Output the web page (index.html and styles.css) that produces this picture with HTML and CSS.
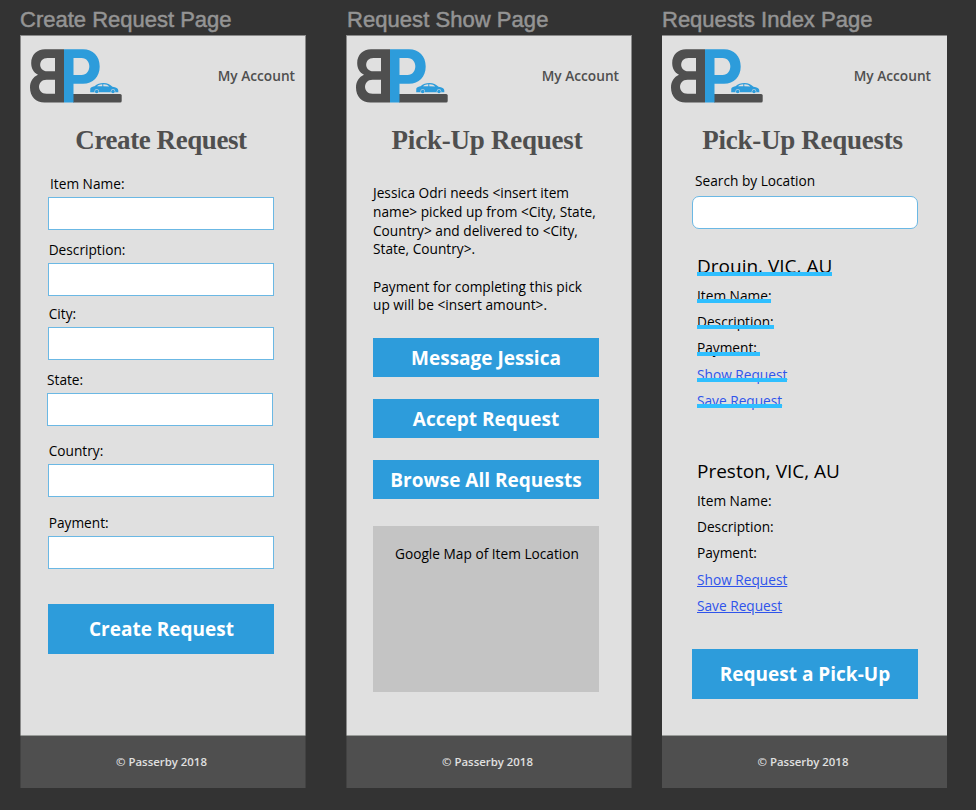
FILE: index.html
```html
<!DOCTYPE html>
<html lang="en">
<head>
<meta charset="utf-8">
<title>Passerby wireframes</title>
<link rel="stylesheet" href="styles.css">
</head>
<body>
<svg class="defs" width="0" height="0" aria-hidden="true">
  <symbol id="logo" viewBox="0 0 92 54">
    <path fill="#4f4f4f" fill-rule="evenodd" d="M34 0.300H15C7 0.300 1.200 6 1.200 14C1.200 19.500 3.500 23.500 8 25.800C3 28 0 32.500 0 38.500C0 47.500 6 53.600 14.500 53.600H34ZM25 9V22.300H17.500C7.800 22.300 7.800 9 17.500 9ZM25 30.700V44.700H16.500C6.600 44.700 6.600 30.700 16.500 30.700Z"/>
    <path fill="#4f4f4f" d="M43 45H90.200Q91.700 45 91.700 46.500V52.100Q91.700 53.600 90.200 53.600H43Z"/>
    <path fill="#2d9cdb" fill-rule="evenodd" d="M34 0.300H53C63 0.300 69.700 7 69.700 17.500C69.700 28 63 34.700 53 34.700H43.500V53.600H34ZM43.500 9V26H51.500C62 26 62 9 51.500 9Z"/>
    <path fill="#2d9cdb" d="M60.300 39.500C61 38 63 37.800 64.500 37.300C67 34.800 70 34 73.500 34C77.500 34 80 35.500 82.500 37.800C86 38.200 88.300 39.200 88.300 41.500V43.300H60.200Z"/>
    <path fill="#e0e0e0" d="M67 37.300C68.800 35.900 70.200 35.400 72.300 35.300V37.300ZM73.300 35.300C76 35.200 77.800 36.200 79.200 37.400L73.300 37.300Z"/>
    <circle cx="66.700" cy="42.500" r="2.300" fill="#e0e0e0"/><circle cx="83" cy="42.500" r="2.300" fill="#e0e0e0"/>
    <circle cx="66.700" cy="42.500" r="1.800" fill="#2d9cdb"/><circle cx="83" cy="42.500" r="1.800" fill="#2d9cdb"/>
  </symbol>
</svg>
<main class="board">
  <section class="artboard">
    <h2 class="artboard-name">Create Request Page</h2>
    <div class="screen edged">
      <header class="header create-header"><svg class="logo"><use href="#logo"/></svg><a class="account">My Account</a></header>
      <h1 class="title create-title">Create Request</h1>
      <form class="form">
        <label class="field item">Item Name:<input></label>
        <label class="field description">Description:<input></label>
        <label class="field city">City:<input></label>
        <label class="field state">State:<input></label>
        <label class="field country">Country:<input></label>
        <label class="field payment">Payment:<input></label>
        <button type="button" class="btn tall">Create Request</button>
      </form>
      <footer class="footer">© Passerby 2018</footer>
    </div>
  </section>
  <section class="artboard">
    <h2 class="artboard-name show-name">Request Show Page</h2>
    <div class="screen edged">
      <header class="header show-header"><svg class="logo"><use href="#logo"/></svg><a class="account">My Account</a></header>
      <h1 class="title show-title">Pick-Up Request</h1>
      <div class="show">
        <p>Jessica Odri needs &lt;insert item<br>name&gt; picked up from &lt;City, State,<br>Country&gt; and delivered to &lt;City,<br>State, Country&gt;.</p>
        <p>Payment for completing this pick<br>up will be &lt;insert amount&gt;.</p>
        <div class="actions">
          <button type="button" class="btn">Message Jessica</button>
          <button type="button" class="btn">Accept Request</button>
          <button type="button" class="btn">Browse All Requests</button>
        </div>
        <div class="map">Google Map of Item Location</div>
      </div>
      <footer class="footer">© Passerby 2018</footer>
    </div>
  </section>
  <section class="artboard">
    <h2 class="artboard-name">Requests Index Page</h2>
    <div class="screen">
      <header class="header index-header"><svg class="logo"><use href="#logo"/></svg><a class="account">My Account</a></header>
      <h1 class="title index-title">Pick-Up Requests</h1>
      <div class="index">
        <label class="search">Search by Location<input></label>
        <ul class="request marked">
          <li class="place"><span>Drouin, VIC, AU</span></li>
          <li><span>Item Name:</span></li>
          <li><span>Description:</span></li>
          <li><span>Payment:&nbsp;</span></li>
          <li><a>Show Request</a></li>
          <li><a>Save Request</a></li>
        </ul>
        <ul class="request">
          <li class="place"><span>Preston, VIC, AU</span></li>
          <li><span>Item Name:</span></li>
          <li><span>Description:</span></li>
          <li><span>Payment:</span></li>
          <li><a>Show Request</a></li>
          <li><a>Save Request</a></li>
        </ul>
        <button type="button" class="btn tall">Request a Pick-Up</button>
      </div>
      <footer class="footer">© Passerby 2018</footer>
    </div>
  </section>
</main>
</body>
</html>
```
FILE: styles.css
```css
* { box-sizing: border-box; margin: 0; padding: 0; }
body {
  width: 976px;
  height: 810px;
  overflow: hidden;
  background: #333;
  color: #000;
  font: 13.7px/18.67px "Open Sans", sans-serif;
}
.defs { display: block; height: 0; }
.board { display: grid; grid-template-columns: 286px 286px 285px; column-gap: 40px; padding-left: 20px; }
.board > :nth-child(3) { margin-left: -10px; margin-right: 10px; }
.artboard-name {
  height: 35px;
  padding-top: 7px;
  color: #949494;
  font: 400 22px/25px "Liberation Sans", Arial, sans-serif;
  -webkit-text-stroke: 0.5px #949494;
  white-space: nowrap;
}
.show-name { padding-left: 1px; letter-spacing: 0.05px; }
.screen {
  display: flex;
  flex-direction: column;
  height: 753px;
  background: #e0e0e0;
  border-top: 1px solid #8a8a8a;
}
.edged { border-left: 1px solid #8a8a8a; border-right: 1px solid #8a8a8a; }
.header { display: flex; justify-content: space-between; height: 80px; padding: 13px 10px 0 9px; }
.logo { width: 92px; height: 54px; }
.show-header { padding-right: 12px; }
.index-header { padding-right: 16px; }
.account { padding-top: 18px; color: #4f4f4f; font-weight: 600; }
.title {
  height: 50px;
  padding-top: 8px;
  color: #4f4f4f;
  font: 700 27px/32px "Liberation Serif", serif;
  letter-spacing: -0.27px;
  text-align: center;
  white-space: nowrap;
}
.create-title { padding-right: 4px; letter-spacing: -0.42px; }
.show-title { padding-right: 4px; letter-spacing: -0.23px; }
.index-title { padding-right: 4px; }
input { display: block; width: 226px; height: 33px; background: #fff; border: 1px solid #6bb8e4; outline: 0; }
.form { display: flex; flex-direction: column; flex: 1; padding: 8px 0 0 27px; }
.field { flex: none; height: 66px; padding-top: 0.7px; text-indent: 0.7px; }
.field input { margin-top: 3.63px; }
.item { text-indent: 2px; }
.description { height: 64px; }
.state { height: 71px; margin-left: -1px; text-indent: 0; }
.country { height: 72.4px; }
.payment { height: 90.6px; }
.btn {
  display: block;
  width: 226px;
  height: 39px;
  border: 0;
  background: #2d9cdb;
  color: #fff;
  font: 700 19px/41px "Open Sans", sans-serif;
  white-space: nowrap;
}
.tall { height: 50px; line-height: 50px; }
.form .tall { padding-left: 1px; }
.show { flex: 1; padding: 18.3px 0 0 26px; }
.show p { margin-bottom: 18.67px; }
.actions { display: grid; row-gap: 22.2px; padding-top: 4.4px; }
.map { width: 226px; height: 166px; margin-top: 26.5px; padding: 19px 0 0 22px; background: #c4c4c4; }
.index { flex: 1; padding: 6px 0 0 30px; }
.search { display: block; text-indent: 3px; }
.search input { margin-top: 5px; border-radius: 7px; }
.request { list-style: none; padding-left: 5px; margin-top: 24px; height: 180px; }
.request + .request { margin-top: 25px; }
.request li { height: 26.25px; }
.request .place { height: 34.2px; font-size: 19px; line-height: 27px; }
.request span, .request a { position: relative; display: inline-block; }
.request a { color: #2f54eb; text-decoration: underline; }
.request.marked a { text-decoration: none; }
.marked span::after, .marked a::after {
  content: "";
  position: absolute;
  left: 0;
  right: 0;
  bottom: 2.4px;
  height: 4px;
  background: #2fbfff;
}
.marked .place span::after { bottom: 4px; }
.index .tall { margin-top: 11.3px; }
.footer {
  height: 53px;
  padding-right: 3px;
  border-top: 1px solid #999c99;
  background: #4f4f4f;
  color: #e0e0e0;
  font-size: 11.4px;
  font-weight: 600;
  line-height: 52px;
  text-align: center;
}
.edged .footer { margin: 0 -1px; border-left: 1px solid #424242; border-right: 1px solid #424242; }
```
